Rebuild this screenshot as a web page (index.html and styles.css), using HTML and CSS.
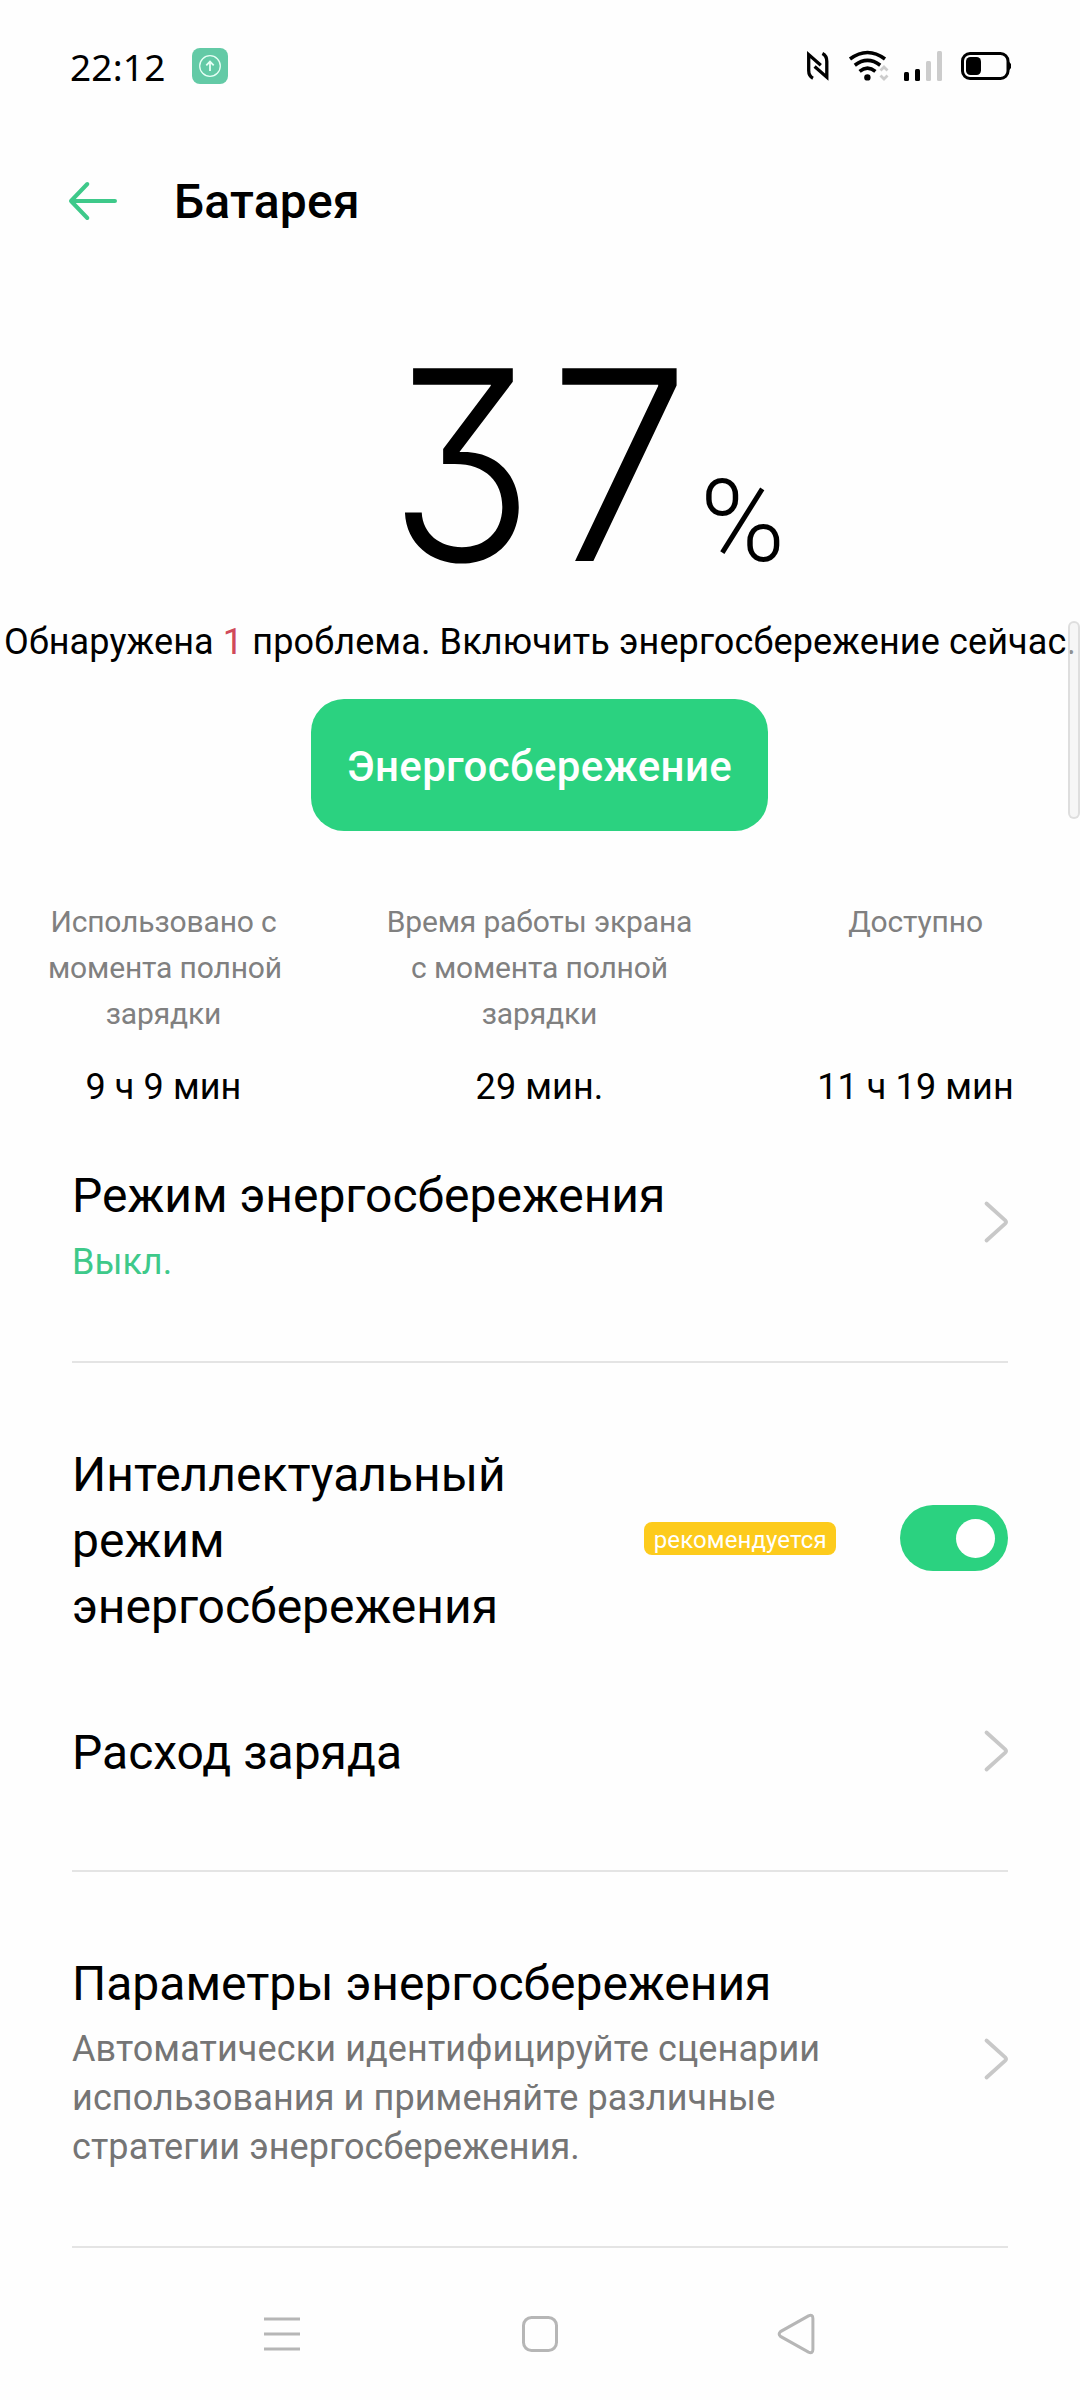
FILE: index.html
```
<!DOCTYPE html>
<html lang="ru">
<head>
<meta charset="utf-8">
<title>Батарея</title>
<link rel="stylesheet" href="styles.css">
</head>
<body>
<div class="screen">
  <header class="status">
    <div class="clock">22:12</div>
    <svg class="app-icon" viewBox="0 0 36 36"><rect width="36" height="36" rx="8" fill="#63caa6"/><g fill="none" stroke="#e6fff5" stroke-width="1.3"><circle cx="18" cy="18" r="10.3"/><path d="M18 23V14M14.3 17.3L18 13.6L21.7 17.3" stroke-width="1.8"/></g></svg>
    <div class="status-icons">
      <svg class="nfc" viewBox="0 0 22 28"><g fill="none" stroke="#000" stroke-width="3.300"><path d="M6 26.200Q1.700 24 1.700 18.500V2.600L13.800 13.200"/><path d="M15.400 1.600Q19.800 3.800 19.800 9.400V25.200L7.600 14.600"/></g></svg>
      <svg class="wifi" viewBox="0 0 40 32"><g fill="none" stroke="#000" stroke-width="3.600"><path d="M1 9Q18.500 -4 36 9"/><path d="M5.800 15.200Q18.500 5.600 31.200 15.200"/><path d="M10.600 21.400Q18.500 15 26.400 21.400"/></g><circle cx="18.400" cy="27.400" r="3.200"/><g fill="none" stroke="#ccc" stroke-width="2.800"><path d="M31.500 20.500L35 17L38.500 20.500M31.500 25.500L35 29L38.500 25.500"/></g></svg>
      <svg class="signal" viewBox="0 0 38 30"><rect x="0" y="21" width="5" height="9" rx="1.500"/><rect x="11" y="18" width="5" height="12" rx="1.500"/><g fill="#ccc"><rect x="22" y="10" width="5" height="20" rx="1.500"/><rect x="33" y="0" width="5" height="30" rx="1.500"/></g></svg>
      <svg class="battery" viewBox="0 0 50 28"><rect x="1.500" y="1.500" width="45.500" height="25" rx="7.500" fill="none" stroke="#000" stroke-width="3"/><rect x="5" y="5" width="15" height="18" rx="4.500"/><path d="M47 8.500L50 12V16L47 19.500Z"/></svg>
    </div>
  </header>

  <div class="header">
    <svg class="back" viewBox="0 0 48 38"><path d="M18.300 2L2 19L18.300 36M2 19H46" fill="none" stroke="#3ec98a" stroke-width="4" stroke-linecap="round" stroke-linejoin="round"/></svg>
    <h1 class="title">Батарея</h1>
  </div>

  <section class="level">
    <span class="digit tens">3</span><span class="digit ones">7</span><span class="percent">%</span>
  </section>
  <p class="message">Обнаружена <span class="count">1</span> проблема. Включить энергосбережение сейчас.</p>
  <button class="save">Энергосбережение</button>

  <section class="stats">
    <div class="stat"><div class="label">Использовано с<br>момента полной<br>зарядки</div><div class="value">9 ч 9 мин</div></div>
    <div class="stat"><div class="label">Время работы экрана<br>с момента полной<br>зарядки</div><div class="value">29 мин.</div></div>
    <div class="stat"><div class="label">Доступно</div><div class="value">11 ч 19 мин</div></div>
  </section>

  <main class="list">
    <div class="item mode">
      <div class="text"><div class="name">Режим энергосбережения</div><div class="state">Выкл.</div></div>
      <svg class="chevron" viewBox="0 0 24 40"><path d="M2.500 1.500L21.200 18.300Q23 20 21.200 21.700L2.500 38.500"/></svg>
    </div>
    <div class="item smart">
      <div class="name">Интеллектуальный<br>режим<br>энергосбережения</div>
      <span class="badge">рекомендуется</span>
      <span class="toggle"><span class="knob"></span></span>
    </div>
    <div class="item usage">
      <div class="name">Расход заряда</div>
      <svg class="chevron" viewBox="0 0 24 40"><path d="M2.500 1.500L21.200 18.300Q23 20 21.200 21.700L2.500 38.500"/></svg>
    </div>
    <div class="item options">
      <div class="text"><div class="name">Параметры энергосбережения</div><div class="desc">Автоматически идентифицируйте сценарии<br>использования и применяйте различные<br>стратегии энергосбережения.</div></div>
      <svg class="chevron" viewBox="0 0 24 40"><path d="M2.500 1.500L21.200 18.300Q23 20 21.200 21.700L2.500 38.500"/></svg>
    </div>
  </main>

  <nav class="nav">
    <svg class="nav-icon" viewBox="0 0 38 42"><path d="M1 6H37M1 21H37M1 36H37"/></svg>
    <svg class="nav-icon" viewBox="0 0 38 42"><rect x="3.500" y="4.500" width="33" height="33" rx="8"/></svg>
    <svg class="nav-icon" viewBox="0 0 38 42"><path d="M31.500 2.900L3.500 18.600Q.8 21 3.500 23.400L31.500 39.100Q35.900 41 35.900 36.500V5.500Q35.900 1 31.500 2.900Z"/></svg>
  </nav>
  <div class="scrollbar"></div>
</div>
</body>
</html>
```
FILE: styles.css
```
* { box-sizing: border-box; }
body { margin: 0; background: #fefefe; color: #000; font-family: Roboto, "Noto Sans", sans-serif; }
svg { display: block; flex: none; overflow: visible; }
.screen { position: relative; width: 1080px; height: 2400px; overflow: hidden; display: flex; flex-direction: column; }

.status { height: 132px; flex: none; display: flex; align-items: center; padding: 0 69px 0 70px; }
.clock { width: 122px; padding-top: 2px; font: 400 37px/48px "Noto Sans", sans-serif; letter-spacing: .2px; }
.app-icon { width: 36px; height: 36px; }
.status-icons { margin-left: auto; display: flex; align-items: center; }
.nfc { width: 22px; height: 28px; margin-right: 20px; }
.wifi { width: 40px; height: 32px; margin-right: 15px; }
.signal { width: 38px; height: 30px; margin-right: 19px; }
.battery { width: 50px; height: 28px; }

.header { height: 138px; flex: none; display: flex; align-items: center; padding-left: 69px; }
.back { width: 48px; height: 38px; }
.title { margin: 2px 0 0 57px; font-size: 48px; font-weight: 500; line-height: 66px; letter-spacing: .2px; }

.level { display: flex; align-items: baseline; height: 200px; margin-top: 94.500px; padding-left: 389px; flex: none; }
.digit { font: 300 265px/200px Inter, sans-serif; font-feature-settings: "cv09"; transform-origin: left; }
.tens { width: 160px; transform: scaleX(.9); }
.ones { width: 151px; transform: scaleX(.95); }
.percent { font-weight: 300; font-size: 115px; line-height: 120px; }

.message { margin: 53px 0 0; padding-left: 4px; font-size: 36px; line-height: 48px; letter-spacing: .13px; white-space: nowrap; }
.count { color: #d04a5a; }
.save { width: 457px; height: 132px; margin: 33.500px 0 0 311px; padding: 3px 0 0; flex: none; border: 0; border-radius: 33px; background: #2bd280; color: #fff; font: 500 42px/56px Roboto, sans-serif; letter-spacing: .33px; }

.stats { display: grid; grid-template-columns: 231px 1fr 231px; margin-top: 67.500px; padding: 0 49px 0 48px; text-align: center; white-space: nowrap; }
.stat { display: flex; flex-direction: column; justify-content: space-between; height: 212px; }
.label { color: #808080; font-size: 30px; line-height: 46.200px; letter-spacing: -.15px; }
.value { font-size: 36px; line-height: 48px; letter-spacing: .1px; }

.list { padding: 0 72px; }
.item { display: flex; align-items: center; justify-content: space-between; }
.name { font-size: 48px; line-height: 66px; }
.chevron { width: 24px; height: 40px; margin-bottom: 6px; fill: none; stroke: #c8c8c8; stroke-width: 3.800; stroke-linecap: round; }
.mode, .usage, .options { border-bottom: 2px solid #e4e4e4; }
.mode { padding: 52px 0 74px; }
.state { margin-top: 9px; color: #3ec98a; font-size: 36px; line-height: 49px; }
.smart { padding-top: 79.500px; }
.smart .name { width: 573px; }
.badge { width: 192px; height: 33px; margin: 0 64px 5px 0; padding-top: 3px; border-radius: 8px; background: #fdcb1c; color: #fff; font-size: 24px; line-height: 31px; letter-spacing: .1px; text-align: center; }
.toggle { width: 108px; height: 66px; margin-bottom: 6px; padding-right: 13px; border-radius: 33px; background: #2bd280; display: flex; align-items: center; justify-content: flex-end; }
.knob { width: 39px; height: 39px; border-radius: 50%; background: #fff; }
.usage { padding: 80px 0 83.500px; }
.usage .chevron { margin-bottom: 4px; }
.options { padding: 79.500px 0 73.500px; }
.desc { margin-top: 8px; color: #757575; font-size: 36px; line-height: 49px; letter-spacing: .1px; }

.nav { display: flex; align-items: center; justify-content: space-between; height: 132px; margin-top: auto; padding: 0 265px 0 263px; }
.nav-icon { width: 38px; height: 42px; fill: none; stroke: #b6b6b6; stroke-width: 3; }

.scrollbar { position: absolute; right: 0; top: 621px; width: 12px; height: 198px; border: 2px solid rgba(216, 216, 216, .8); border-radius: 6px; background: rgba(240, 240, 240, .6); }
```
